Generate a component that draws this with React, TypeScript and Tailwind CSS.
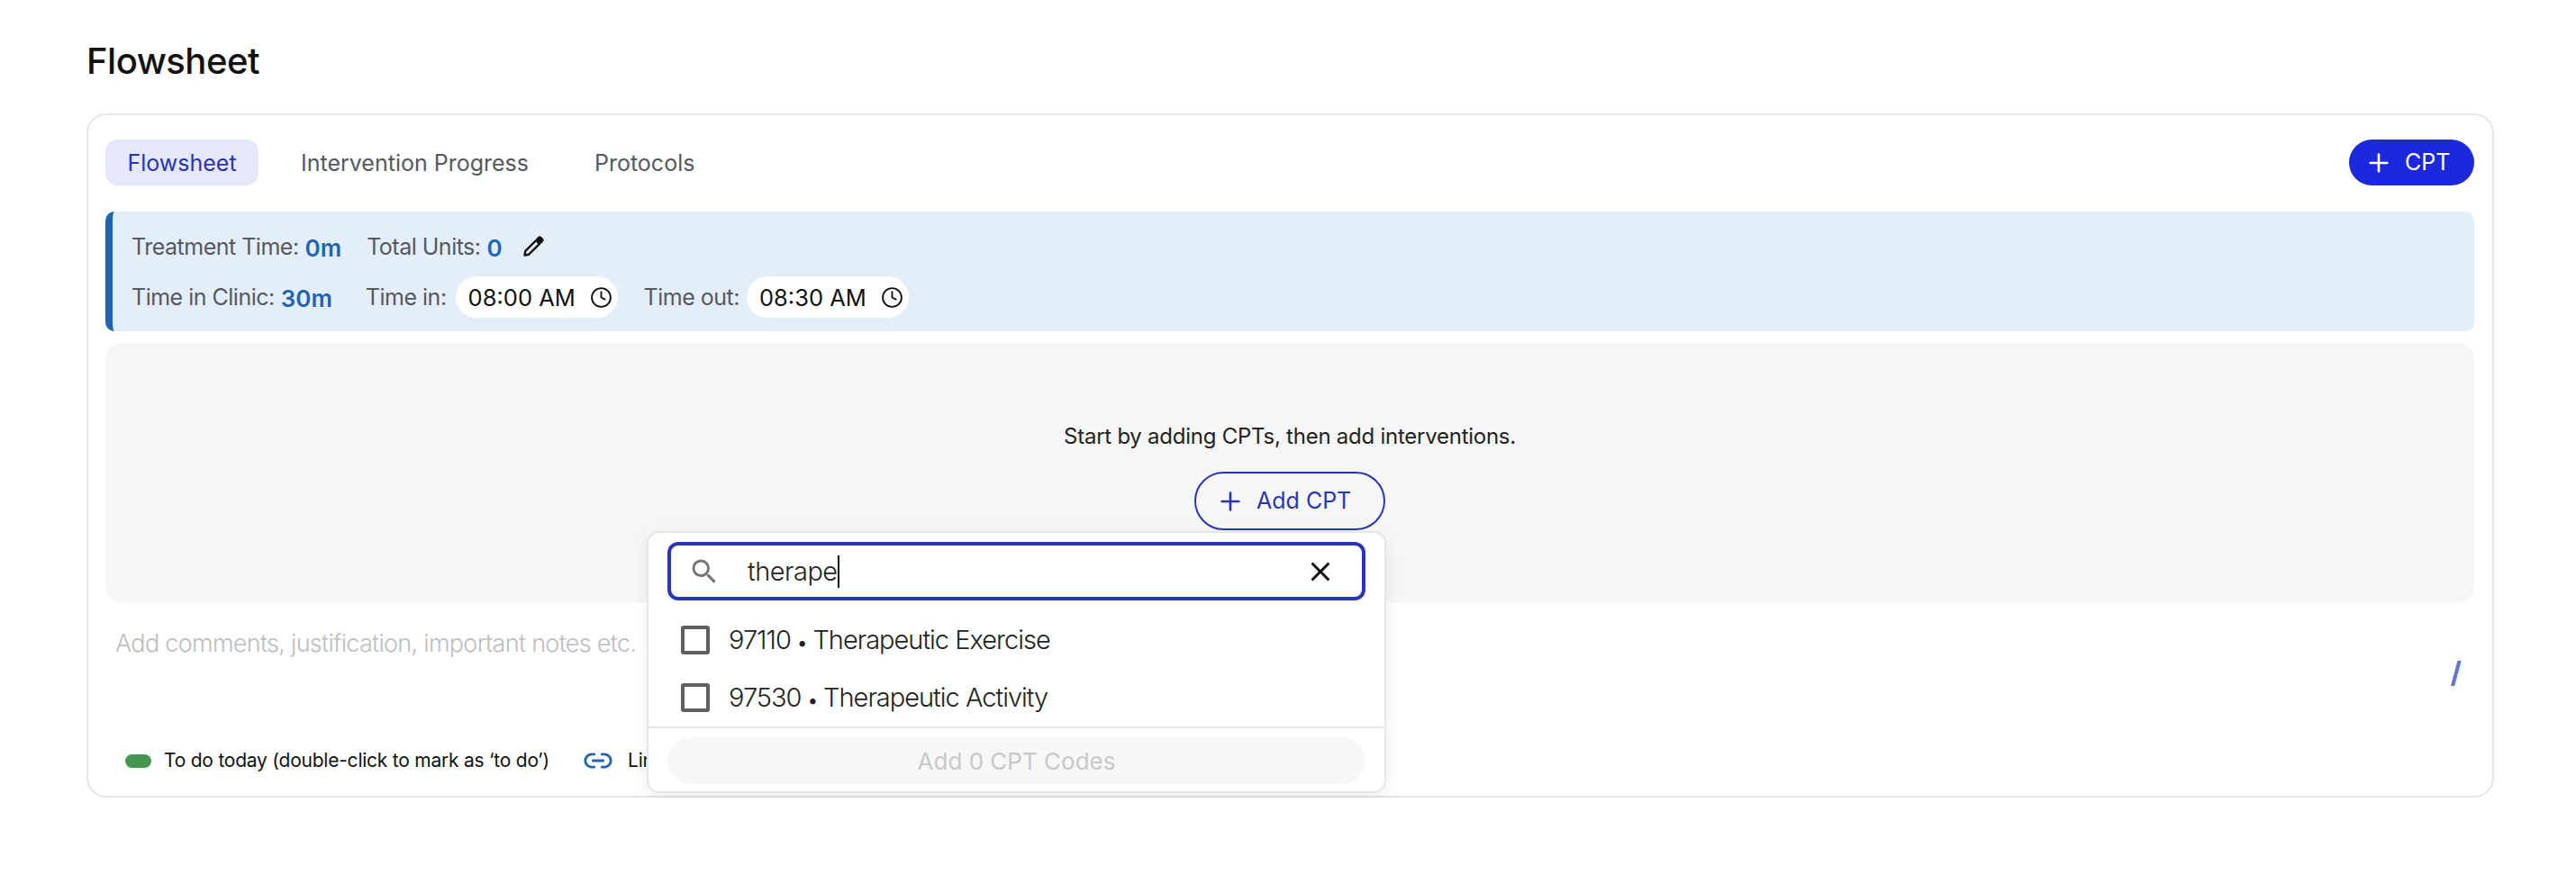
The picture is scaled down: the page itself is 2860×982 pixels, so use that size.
import { Clock, Link2, Plus } from 'lucide-react'
import { MdClose, MdSearch } from 'react-icons/md'

function PencilIcon() {
  return (
    <svg width="24" height="24" viewBox="0 0 24 24" fill="none" stroke="#111" strokeWidth="2.4" strokeLinejoin="round" className="ml-[22px]">
      <path d="M2.5 21.5l.8-4.6L15.2 5l3.8 3.8L7.1 20.7z" />
      <path d="M16.5 3.7l1.6-1.6a1.6 1.6 0 0 1 2.2 0l1.6 1.6a1.6 1.6 0 0 1 0 2.2l-1.6 1.6z" fill="#111" />
    </svg>
  )
}

function Stat({ label, value }: { label: string; value: string }) {
  return (
    <span className="flex items-center gap-[7px] pt-[2px] text-[25px] tracking-[-0.5px] text-[#55595f]">
      {label}
      <span className="text-[26px] font-semibold tracking-[0px] text-[#1f63b5]">{value}</span>
    </span>
  )
}

function TimePill({ value }: { value: string }) {
  return (
    <span className="flex h-[46px] w-[180px] items-center justify-between rounded-full bg-white pl-[14px] pr-[6px] text-[25.5px] tracking-normal text-[#111]">
      <span className="pt-[2px]">{value}</span>
      <Clock size={25} strokeWidth={1.8} />
    </span>
  )
}

function CptOption({ code, name }: { code: string; name: string }) {
  return (
    <div className="flex h-[64px] items-center gap-[21px] px-[36px]">
      <span className="h-[32px] w-[32px] rounded-[3px] border-[4px] border-[#5f5f5f]" />
      <span className="text-[29px] font-light tracking-[-1px] text-[#222]">
        {code} <span className="text-[20px] font-normal">•</span> {name}
      </span>
    </div>
  )
}

function CptDropdown() {
  return (
    <div className="absolute left-[620px] top-[462px] w-[821px] rounded-[14px] border-[2px] border-[#e6e6e6] bg-white shadow-[0_6px_18px_rgba(0,0,0,0.07)]">
      <div className="px-[21px] pt-[10px]">
        <div className="flex h-[65px] items-center rounded-[12px] border-[4px] border-[#2a35b5] pl-[19px] pr-[28px]">
          <MdSearch size={36} className="text-[#777]" />
          <span className="ml-[30px] flex h-[36px] flex-1 items-center text-[29px] font-light tracking-[-0.5px] text-[#222]">
            therape
            <span className="h-[36px] w-[2px] bg-[#111]" />
          </span>
          <MdClose size={36} className="text-[#111]" />
        </div>
      </div>
      <div className="mt-[12px]">
        <CptOption code="97110" name="Therapeutic Exercise" />
        <CptOption code="97530" name="Therapeutic Activity" />
      </div>
      <div className="border-t-[2px] border-[#e6e6e6] px-[21px] pb-[8px] pt-[10px]">
        <div className="flex h-[52px] items-center justify-center rounded-full bg-[#f7f7f7] text-[26px] text-[#c8c8c8]">
          Add 0 CPT Codes
        </div>
      </div>
    </div>
  )
}

export default function App() {
  return (
    <div className="w-[2860px] bg-white pl-[96px] pt-[44px] font-['Inter',sans-serif]">
      <h1 className="mb-[34px] h-[48px] text-[40px] font-medium leading-[48px] tracking-[-0.5px] text-[#111]">Flowsheet</h1>

      <div className="relative w-[2673px] rounded-[22px] border-[2px] border-[#e5e5e5] pb-[21px] pl-[19px] pr-[20px] pt-[27px]">
        <div className="flex h-[51px] items-center justify-between">
          <div className="flex items-center text-[25px] text-[#55595f]">
            <span className="flex h-[51px] w-[170px] items-center justify-center rounded-[14px] bg-[#e5e7fb] pt-[2px] text-[#2a35b5]">
              Flowsheet
            </span>
            <span className="ml-[47px] pt-[2px]">Intervention Progress</span>
            <span className="ml-[73px] pt-[2px]">Protocols</span>
          </div>
          <button className="flex h-[51px] w-[139px] items-center gap-[13px] rounded-full bg-[#1c28dc] pl-[17px] text-[25px] text-white">
            <Plus size={32} strokeWidth={2} />
            CPT
          </button>
        </div>

        <div className="mt-[29px] h-[133px] rounded-[10px] border-l-[8px] border-[#1f63b5] bg-[#e4eefb] pl-[21px] pt-[21px]">
          <div className="flex h-[36px] items-center">
            <Stat label="Treatment Time:" value="0m" />
            <span className="ml-[28px]"><Stat label="Total Units:" value="0" /></span>
            <PencilIcon />
          </div>
          <div className="mt-[15px] flex h-[46px] items-center">
            <Stat label="Time in Clinic:" value="30m" />
            <span className="ml-[37px] flex items-center gap-[10px] text-[25px] tracking-[-0.5px] text-[#55595f]">
              <span className="pt-[2px]">Time in:</span>
              <TimePill value="08:00 AM" />
            </span>
            <span className="ml-[29px] flex items-center gap-[8px] text-[25px] tracking-[-0.5px] text-[#55595f]">
              <span className="pt-[2px]">Time out:</span>
              <TimePill value="08:30 AM" />
            </span>
          </div>
        </div>

        <div className="mt-[13px] flex h-[288px] flex-col items-center rounded-[18px] bg-[#f6f6f6] pt-[86px]">
          <p className="h-[36px] text-[24px] leading-[36px] tracking-[-0.25px] text-[#222]">Start by adding CPTs, then add interventions.</p>
          <button className="mt-[21px] flex h-[65px] w-[212px] items-center gap-[13px] rounded-full border-[2px] border-[#2a35b5] pl-[22px] text-[25px] text-[#2a35b5]">
            <Plus size={32} strokeWidth={2} />
            Add CPT
          </button>
        </div>

        <p className="ml-[11px] mt-[26px] h-[40px] text-[27px] font-light leading-[40px] tracking-[-0.7px] text-[#bdbdbd]">
          Add comments, justification, important notes etc.
        </p>
        <div className="flex h-[24px] justify-end pr-[14px] text-[32px] font-bold leading-[24px] text-[#6670d8]">/</div>

        <div className="ml-[22px] mt-[68px] flex h-[36px] items-center text-[21px] tracking-[-0.23px] text-[#111]">
          <span className="h-[15px] w-[29px] rounded-full bg-[#43964f]" />
          <span className="ml-[14px]">To do today (double-click to mark as ‘to do’)</span>
          <Link2 size={34} strokeWidth={2} className="ml-[37px] text-[#1f63b5]" />
          <span className="ml-[16px]">Link</span>
        </div>

        <CptDropdown />
      </div>
    </div>
  )
}
